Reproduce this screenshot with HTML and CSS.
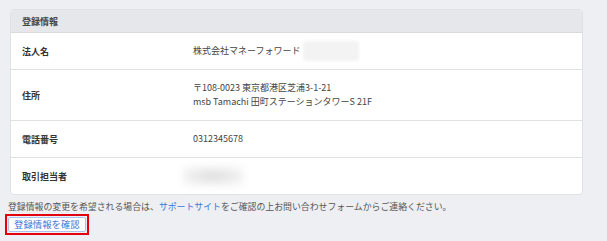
FILE: index.html
```html
<!DOCTYPE html>
<html lang="ja">
<head>
  <meta charset="UTF-8">
  <title>登録情報</title>
  <link rel="stylesheet" href="styles.css">
</head>
<body>
  <div class="card">
    <div class="card-head">登録情報</div>
    <div class="row">
      <div class="label">法人名</div>
      <div class="value">株式会社マネーフォワード<span class="blur blur-name"></span></div>
    </div>
    <div class="row row-tall">
      <div class="label">住所</div>
      <div class="value">〒108-0023 東京都港区芝浦3-1-21<br>msb Tamachi 田町ステーションタワーS 21F</div>
    </div>
    <div class="row">
      <div class="label">電話番号</div>
      <div class="value">0312345678</div>
    </div>
    <div class="row">
      <div class="label">取引担当者</div>
      <div class="value"><span class="blur blur-person"></span></div>
    </div>
  </div>
  <p class="note">登録情報の変更を希望される場合は、<a href="#">サポートサイト</a>をご確認の上お問い合わせフォームからご連絡ください。</p>
  <div class="mark">
    <button class="btn" type="button">登録情報を確認</button>
  </div>
</body>
</html>
```

FILE: styles.css
```css
* {
  margin: 0;
  padding: 0;
  box-sizing: border-box;
}
body {
  background: #eeeff3;
  font-family: 'Noto Sans CJK JP', 'Noto Sans', sans-serif;
  font-size: 9px;
  color: #333;
  padding: 9px 24px 0 10px;
}
.card {
  background: #fff;
  border: 1px solid #dfe1e5;
  border-radius: 4px;
  overflow: hidden;
}
.card-head {
  background: #e5e7eb;
  height: 23px;
  line-height: 23px;
  padding-left: 11px;
  font-weight: bold;
  color: #444;
  border-bottom: 1px solid #d8dade;
}
.row {
  display: flex;
  align-items: center;
  height: 37px;
  border-bottom: 1px solid #dfe1e5;
}
.row:last-child {
  border-bottom: none;
  height: 36px;
}
.row-tall {
  height: 51px;
}
.label {
  width: 182px;
  padding-left: 11px;
  font-weight: bold;
  color: #333;
}
.value {
  color: #444;
  line-height: 14px;
  display: flex;
  align-items: center;
}
.row-tall .value {
  display: block;
}
.blur {
  display: inline-block;
  border-radius: 3px;
}
.blur-name {
  width: 56px;
  height: 20px;
  margin-left: 3px;
  background: #f3f3f3;
  filter: blur(1.5px);
}
.blur-person {
  width: 60px;
  height: 18px;
  margin-left: -10px;
  background: radial-gradient(ellipse at center, #dadada 0%, #ececec 50%, #f8f8f8 100%);
  filter: blur(4px);
}
.note {
  margin-top: 6px;
  margin-left: -2px;
  font-size: 8.9px;
  line-height: 12px;
  color: #555;
}
.note a {
  color: #3a78d8;
  text-decoration: none;
}
.mark {
  display: inline-block;
  margin-top: 1px;
  margin-left: -5px;
  border: 2px solid #e3000f;
  padding: 1px;
}
.btn {
  display: block;
  background: #fff;
  border: 1px solid #aac3ee;
  border-radius: 2px;
  color: #3a78d8;
  font-family: inherit;
  font-size: 9.4px;
  line-height: 13px;
  padding: 0 5px;
}
```
